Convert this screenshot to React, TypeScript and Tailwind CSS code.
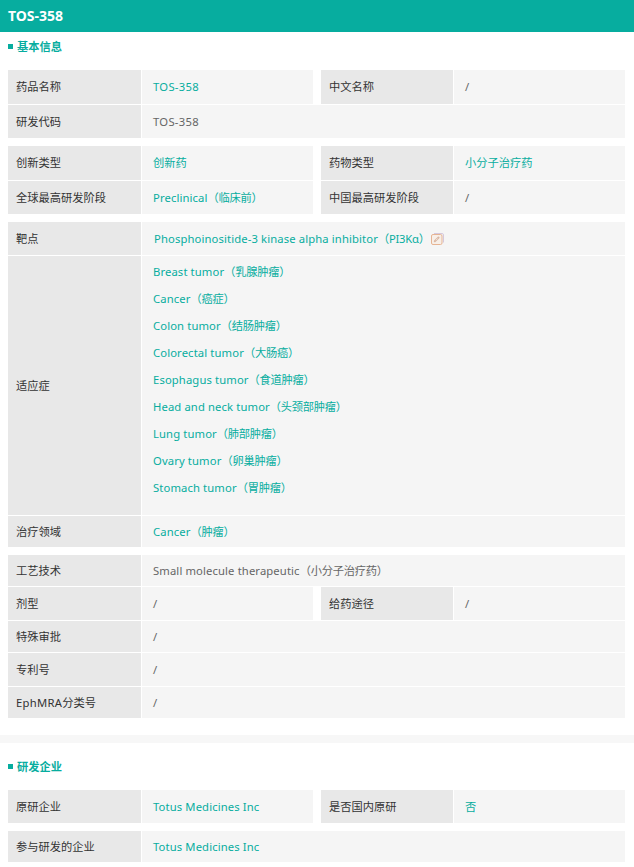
import type { ReactNode } from 'react'

const font = { fontFamily: '"Noto Sans", "Noto Sans CJK SC", sans-serif' }

// latin names run a bit wider than Noto here, the bracketed chinese a bit tighter
function Txt({ children }: { children: string }) {
  const i = children.indexOf('（')
  if (i < 0) return <span className="tracking-[0.12px]">{children}</span>
  return (
    <span className="whitespace-nowrap">
      <span className="tracking-[0.12px]">{children.slice(0, i)}</span>
      <span className="tracking-[-0.25px]">{children.slice(i)}</span>
    </span>
  )
}

function Label({ children, className = 'w-[133px]' }: { children: ReactNode; className?: string }) {
  return (
    <div className={`${className} shrink-0 flex items-center pl-2 bg-[#e8e8e8] text-[#333333]`}>
      {children}
    </div>
  )
}

function Value({ children, link, className = 'flex-1' }: { children: ReactNode; link?: boolean; className?: string }) {
  return (
    <div className={`${className} flex items-center pl-[11px] bg-[#f5f5f5] ${link ? 'text-[#07ad9f]' : 'text-[#666666]'}`}>
      {children}
    </div>
  )
}

function Row({ label, value, link, h }: { label: ReactNode; value: ReactNode; link?: boolean; h: string }) {
  return (
    <div className={`flex gap-px ${h}`}>
      <Label>{label}</Label>
      <Value link={link}>{value}</Value>
    </div>
  )
}

function Row2({ a, b, c, d, aLink, dLink, h }: { a: string; b: ReactNode; c: string; d: string; aLink?: boolean; dLink?: boolean; h: string }) {
  return (
    <div className={`flex ${h}`}>
      <div className="flex gap-px w-[305px]">
        <Label>{a}</Label>
        <Value link={aLink}>{b}</Value>
      </div>
      <div className="flex gap-px ml-[8px] flex-1">
        <Label className="w-[132px]">{c}</Label>
        <Value link={dLink}>{d}</Value>
      </div>
    </div>
  )
}

function Title({ children }: { children: ReactNode }) {
  return (
    <div className="flex items-center gap-1 h-[15px] text-[#07ad9f] font-bold">
      <span className="w-[5px] h-[5px] bg-[#07ad9f]" />
      {children}
    </div>
  )
}

function LinkIcon() {
  return (
    <svg width="13" height="12" viewBox="0 0 13 12" fill="none" className="ml-px shrink-0">
      <path d="M3 0.5h8a1.5 1.5 0 0 1 1.5 1.5v7.5" stroke="#d5c8dc" strokeWidth="1" />
      <rect x="0.5" y="1.5" width="10.5" height="10" rx="1.5" stroke="#e6b493" strokeWidth="1" fill="#f8efe8" />
      <path d="M3.8 8.2l3.8-3.6" stroke="#d9b7a4" strokeWidth="2" strokeLinecap="round" />
      <path d="M4.8 7.2l1.8-1.7" stroke="#f8efe8" strokeWidth="0.7" />
    </svg>
  )
}

const indications = [
  'Breast tumor（乳腺肿瘤）',
  'Cancer（癌症）',
  'Colon tumor（结肠肿瘤）',
  'Colorectal tumor（大肠癌）',
  'Esophagus tumor（食道肿瘤）',
  'Head and neck tumor（头颈部肿瘤）',
  'Lung tumor（肺部肿瘤）',
  'Ovary tumor（卵巢肿瘤）',
  'Stomach tumor（胃肿瘤）',
]

export default function App() {
  return (
    <div style={font} className="w-[634px] h-[867px] overflow-hidden bg-white text-[11.25px] leading-none">
      <div className="h-8 flex items-center px-2 bg-[#07ad9f] text-white text-sm font-bold">TOS-358</div>

      <div className="pl-2 pr-[9px]">
        <div className="pt-[7px] pb-[16px]">
          <Title>基本信息</Title>
        </div>

        <div className="flex flex-col gap-px">
          <Row2 h="h-[34px]" a="药品名称" b={<span className="tracking-[0.28px]">TOS-358</span>} aLink c="中文名称" d="/" />
          <Row h="h-[33px]" label="研发代码" value={<span className="tracking-[0.28px]">TOS-358</span>} />
        </div>

        <div className="flex flex-col gap-px mt-2">
          <Row2 h="h-[34px]" a="创新类型" b="创新药" aLink c="药物类型" d="小分子治疗药" dLink />
          <Row2 h="h-[33px]" a="全球最高研发阶段" b={<Txt>Preclinical（临床前）</Txt>} aLink c="中国最高研发阶段" d="/" />
        </div>

        <div className="flex flex-col gap-px mt-2">
          <Row
            h="h-[33px]"
            label="靶点"
            link
            value={
              <>
                <span className="ml-px"><Txt>Phosphoinositide-3 kinase alpha inhibitor（PI3Kα）</Txt></span>
                <LinkIcon />
              </>
            }
          />
          <div className="flex gap-px h-[259px]">
            <Label>适应症</Label>
            <div className="flex-1 flex flex-col pt-[2px] pl-[11px] bg-[#f5f5f5] text-[#07ad9f]">
              {indications.map(item => (
                <div key={item} className="h-[27px] flex items-center"><Txt>{item}</Txt></div>
              ))}
            </div>
          </div>
          <Row h="h-[31px]" label="治疗领域" link value={<Txt>Cancer（肿瘤）</Txt>} />
        </div>

        <div className="flex flex-col gap-px mt-2">
          <Row h="h-[31px]" label="工艺技术" value={<Txt>Small molecule therapeutic（小分子治疗药）</Txt>} />
          <Row2 h="h-[33px]" a="剂型" b="/" c="给药途径" d="/" />
          <Row h="h-[31px]" label="特殊审批" value="/" />
          <Row h="h-[33px]" label="专利号" value="/" />
          <Row h="h-[31px]" label={<><span className="tracking-[0.3px]">EphMRA</span>分类号</>} value="/" />
        </div>
      </div>

      <div className="h-2 mt-[17px] bg-[#f7f7f7]" />

      <div className="pl-2 pr-[9px]">
        <div className="pt-4 pb-[16px]">
          <Title>研发企业</Title>
        </div>
        <Row2 h="h-[33px]" a="原研企业" b={<Txt>Totus Medicines Inc</Txt>} aLink c="是否国内原研" d="否" dLink />
        <div className="mt-2">
          <Row h="h-[31px]" label="参与研发的企业" link value={<Txt>Totus Medicines Inc</Txt>} />
        </div>
      </div>
    </div>
  )
}
